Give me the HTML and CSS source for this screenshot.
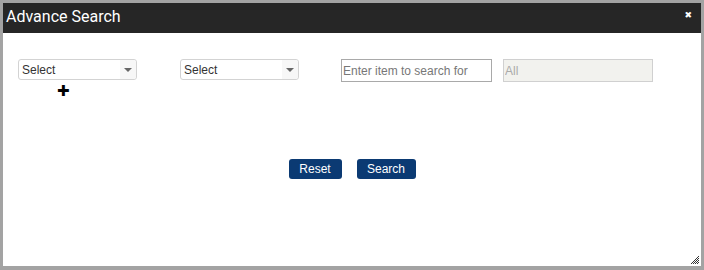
FILE: index.html
```html
<!DOCTYPE html>
<html>
<head>
<meta charset="utf-8">
<link rel="stylesheet" href="styles.css">
</head>
<body>
<div class="dialog">
  <div class="titlebar">
    <span class="title">Advance Search</span>
    <span class="close">✖</span>
  </div>
  <div class="content">
    <div class="row">
      <div class="cell cell-first">
        <div class="select"><span class="select-text">Select</span><span class="select-arrow"></span></div>
        <div class="plus">✚</div>
      </div>
      <div class="cell cell-second">
        <div class="select"><span class="select-text">Select</span><span class="select-arrow"></span></div>
      </div>
      <input class="text-input" type="text" placeholder="Enter item to search for">
      <input class="text-input disabled" type="text" value="All" disabled>
    </div>
    <div class="buttons">
      <button class="btn btn-reset">Reset</button>
      <button class="btn btn-search">Search</button>
    </div>
  </div>
  <div class="resize">
    <svg width="8" height="8" viewBox="0 0 8 8">
      <g fill="#333">
        <rect x="7" y="0" width="1" height="1"/>
        <rect x="6" y="1" width="1" height="1"/>
        <rect x="5" y="2" width="1" height="1"/><rect x="7" y="2" width="1" height="1"/>
        <rect x="4" y="3" width="1" height="1"/><rect x="6" y="3" width="1" height="1"/>
        <rect x="3" y="4" width="1" height="1"/><rect x="5" y="4" width="1" height="1"/><rect x="7" y="4" width="1" height="1"/>
        <rect x="2" y="5" width="1" height="1"/><rect x="4" y="5" width="1" height="1"/><rect x="6" y="5" width="1" height="1"/>
        <rect x="1" y="6" width="1" height="1"/><rect x="3" y="6" width="1" height="1"/><rect x="5" y="6" width="1" height="1"/><rect x="7" y="6" width="1" height="1"/>
        <rect x="0" y="7" width="1" height="1"/><rect x="2" y="7" width="1" height="1"/><rect x="4" y="7" width="1" height="1"/><rect x="6" y="7" width="1" height="1"/>
      </g>
    </svg>
  </div>
</div>
</body>
</html>
```

FILE: styles.css
```css
html, body {
  margin: 0;
  padding: 0;
}
body {
  background: #a3a3a3;
  width: 704px;
  height: 270px;
  font-family: "Liberation Sans", Arial, sans-serif;
  overflow: hidden;
}
.dialog {
  position: relative;
  margin: 3px 0 0 3px;
  width: 698px;
  height: 263px;
  background: #fff;
  box-sizing: border-box;
}
.titlebar {
  height: 30px;
  background: #262626;
  display: flex;
  align-items: center;
  justify-content: space-between;
  padding: 0 9px 0 3px;
}
.title {
  color: #fff;
  font-family: Roboto, "Liberation Sans", sans-serif;
  font-size: 16px;
  line-height: 30px;
  margin-top: -3px;
}
.close {
  color: #fff;
  font-family: "DejaVu Sans", sans-serif;
  font-size: 9px;
  margin-top: -6px;
}
.content {
  padding: 26px 0 0 15px;
}
.row {
  display: flex;
  align-items: flex-start;
}
.cell {
  display: flex;
  flex-direction: column;
}
.cell-second {
  margin-left: 43px;
}
.select {
  width: 119px;
  height: 21px;
  border: 1px solid #d3d3d3;
  border-radius: 3px;
  box-sizing: border-box;
  display: flex;
  align-items: center;
  justify-content: space-between;
  background: #fff;
}
.select-text {
  font-size: 12px;
  color: #333;
  padding-left: 3px;
}
.select-arrow {
  width: 16px;
  height: 19px;
  background: #f7f7f7;
  position: relative;
  border-radius: 0 3px 3px 0;
}
.select-arrow::after {
  content: "";
  position: absolute;
  left: 4px;
  top: 8px;
  border-left: 4px solid transparent;
  border-right: 4px solid transparent;
  border-top: 4px solid #666;
}
.plus {
  font-family: "DejaVu Sans", sans-serif;
  font-size: 15px;
  font-weight: bold;
  color: #000;
  margin-left: 39px;
  line-height: 16px;
  margin-top: 3px;
}
.text-input {
  height: 23px;
  box-sizing: border-box;
  border: 1px solid #a9a9a9;
  font-family: "Liberation Sans", Arial, sans-serif;
  font-size: 12px;
  padding: 0 1px;
  margin: 0 0 0 42px;
  width: 151px;
  color: #333;
  outline: none;
}
.text-input::placeholder {
  color: #777;
}
.text-input.disabled {
  margin-left: 11px;
  width: 150px;
  background: #f2f2ee;
  border: 1px solid #d0d0d0;
  color: #aaa;
  font-size: 12px;
}
.buttons {
  display: flex;
  justify-content: center;
  gap: 15px;
  margin: 60px 0 0 -15px;
}
.btn {
  height: 20px;
  border: none;
  border-radius: 3px;
  background: #0b3a73;
  color: #fff;
  font-family: "Liberation Sans", Arial, sans-serif;
  font-size: 12px;
  padding: 0;
}
.btn-reset {
  width: 53px;
}
.btn-search {
  width: 59px;
}
.resize {
  position: absolute;
  right: 2px;
  bottom: 2px;
  width: 8px;
  height: 8px;
  display: flex;
}
```
